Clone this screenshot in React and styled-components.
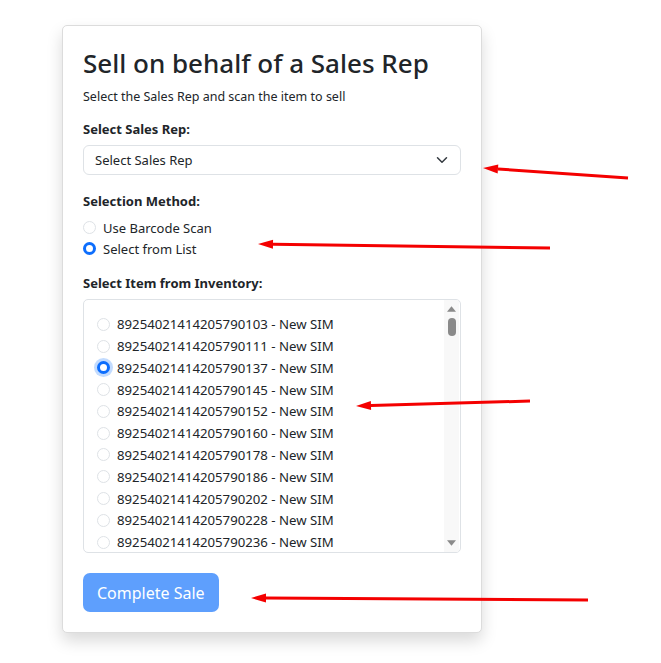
import React, { useState } from 'react';
import styled, { createGlobalStyle } from 'styled-components';

const GlobalStyle = createGlobalStyle`
  * { box-sizing: border-box; }
  body {
    margin: 0;
    background: #fff;
    font-family: "Noto Sans", "Open Sans", sans-serif;
    color: #212529;
  }
`;

const items = [
  '89254021414205790103',
  '89254021414205790111',
  '89254021414205790137',
  '89254021414205790145',
  '89254021414205790152',
  '89254021414205790160',
  '89254021414205790178',
  '89254021414205790186',
  '89254021414205790202',
  '89254021414205790228',
  '89254021414205790236',
  '89254021414205790244',
];

const arrows = [
  { x1: 628, y1: 178, x2: 483, y2: 168 },
  { x1: 550, y1: 248, x2: 258, y2: 244 },
  { x1: 530, y1: 401, x2: 356, y2: 406 },
  { x1: 588, y1: 600, x2: 251, y2: 598 },
];

const Arrow = ({ x1, y1, x2, y2 }) => {
  const a = Math.atan2(y1 - y2, x1 - x2);
  const len = 15;
  const half = 4.5;
  const bx = x2 + Math.cos(a) * len;
  const by = y2 + Math.sin(a) * len;
  const px = -Math.sin(a) * half;
  const py = Math.cos(a) * half;
  return (
    <g>
      <line x1={x1} y1={y1} x2={bx} y2={by} stroke="#f40000" strokeWidth="3" />
      <polygon
        points={`${x2},${y2} ${bx + px},${by + py} ${bx - px},${by - py}`}
        fill="#f40000"
      />
    </g>
  );
};

const App = () => {
  const [method, setMethod] = useState('list');
  const [picked, setPicked] = useState(items[2]);

  return (
    <Page>
      <GlobalStyle />
      <Card>
        <Title>Sell on behalf of a Sales Rep</Title>
        <Subtitle>Select the Sales Rep and scan the item to sell</Subtitle>

        <FieldLabel>Select Sales Rep:</FieldLabel>
        <SelectBox>
          <span>Select Sales Rep</span>
          <svg width="12" height="12" viewBox="0 0 16 16">
            <path d="M2 5l6 6 6-6" fill="none" stroke="#343a40" strokeWidth="2" strokeLinecap="round" strokeLinejoin="round" />
          </svg>
        </SelectBox>

        <FieldLabel $top={16}>Selection Method:</FieldLabel>
        <RadioGroup>
          <RadioRow onClick={() => setMethod('scan')}>
            <Radio $checked={method === 'scan'} />
            Use Barcode Scan
          </RadioRow>
          <RadioRow onClick={() => setMethod('list')}>
            <Radio $checked={method === 'list'} />
            Select from List
          </RadioRow>
        </RadioGroup>

        <FieldLabel $top={14}>Select Item from Inventory:</FieldLabel>
        <ListBox>
          <ListItems>
            {items.map((id) => (
              <ListRow key={id} onClick={() => setPicked(id)}>
                <Radio $checked={picked === id} $focus={picked === id} />
                {id} - New SIM
              </ListRow>
            ))}
          </ListItems>
          <ScrollTrack>
            <ScrollArrow viewBox="0 0 10 6">
              <path d="M0 6L5 0L10 6Z" fill="#8a8a8a" />
            </ScrollArrow>
            <ScrollThumb />
            <ScrollSpacer />
            <ScrollArrow viewBox="0 0 10 6">
              <path d="M0 0L5 6L10 0Z" fill="#8a8a8a" />
            </ScrollArrow>
          </ScrollTrack>
        </ListBox>

        <SubmitButton disabled>Complete Sale</SubmitButton>
      </Card>

      <Annotations width="661" height="663">
        {arrows.map((a, i) => (
          <Arrow key={i} {...a} />
        ))}
      </Annotations>
    </Page>
  );
};

const Page = styled.div`
  position: relative;
  width: 661px;
  height: 663px;
  padding: 25px 0 0 62px;
`;

const Card = styled.div`
  width: 420px;
  height: 608px;
  padding: 18px 20px 20px;
  background: #fff;
  border: 1px solid #dcdcdc;
  border-radius: 5px;
  box-shadow: 0 8px 16px rgba(0, 0, 0, 0.15);
  display: flex;
  flex-direction: column;
  align-items: flex-start;
`;

const Title = styled.h2`
  margin: 0;
  font-size: 26px;
  font-weight: 500;
  line-height: 38px;
  color: #212529;
`;

const Subtitle = styled.p`
  margin: 5px 0 12px;
  font-size: 12.5px;
  line-height: 20px;
`;

const FieldLabel = styled.label`
  margin: ${({ $top }) => $top || 0}px 0 6px;
  font-size: 13px;
  font-weight: 700;
  line-height: 20px;
`;

const SelectBox = styled.div`
  width: 100%;
  height: 32px;
  padding: 0 12px 0 11px;
  display: flex;
  align-items: center;
  justify-content: space-between;
  border: 1px solid #dee2e6;
  border-radius: 6px;
  font-size: 13px;
  color: #212529;
`;

const RadioGroup = styled.div`
  display: flex;
  flex-direction: column;
`;

const RadioRow = styled.div`
  display: flex;
  align-items: center;
  gap: 7px;
  height: 21px;
  font-size: 13px;
  color: #212529;
  cursor: pointer;
`;

const Radio = styled.span`
  flex: none;
  width: 13px;
  height: 13px;
  border-radius: 50%;
  border: ${({ $checked }) => ($checked ? '3.5px solid #0d6efd' : '1px solid #dee2e6')};
  background: #fff;
  box-shadow: ${({ $focus }) => ($focus ? '0 0 0 3px rgba(13, 110, 253, 0.25)' : 'none')};
`;

const ListBox = styled.div`
  width: 100%;
  height: 254px;
  flex: none;
  display: flex;
  border: 1px solid #dee2e6;
  border-radius: 5px;
  overflow: hidden;
`;

const ListItems = styled.div`
  flex: 1;
  padding: 13px 0 0 13px;
  overflow: hidden;
`;

const ListRow = styled.div`
  display: flex;
  align-items: center;
  gap: 7px;
  height: 21.8px;
  font-size: 13.2px;
  color: #212529;
  white-space: nowrap;
  cursor: pointer;
`;

const ScrollTrack = styled.div`
  width: 15px;
  margin-right: 1px;
  display: flex;
  flex-direction: column;
  align-items: center;
  padding: 6px 0 6px;
  background: #f8f8f8;
`;

const ScrollArrow = styled.svg`
  width: 9px;
  height: 6px;
  flex: none;
`;

const ScrollThumb = styled.div`
  width: 8px;
  height: 18px;
  margin-top: 6px;
  border-radius: 4px;
  background: #8a8a8a;
`;

const ScrollSpacer = styled.div`
  flex: 1;
`;

const SubmitButton = styled.button`
  margin-top: 20px;
  height: 41px;
  padding: 0 14px;
  border: none;
  border-radius: 7px;
  background: #5e9ffd;
  color: #fff;
  font-family: inherit;
  font-size: 16px;
  cursor: default;
`;

const Annotations = styled.svg`
  position: absolute;
  left: 0;
  top: 0;
  pointer-events: none;
`;

export default App;
